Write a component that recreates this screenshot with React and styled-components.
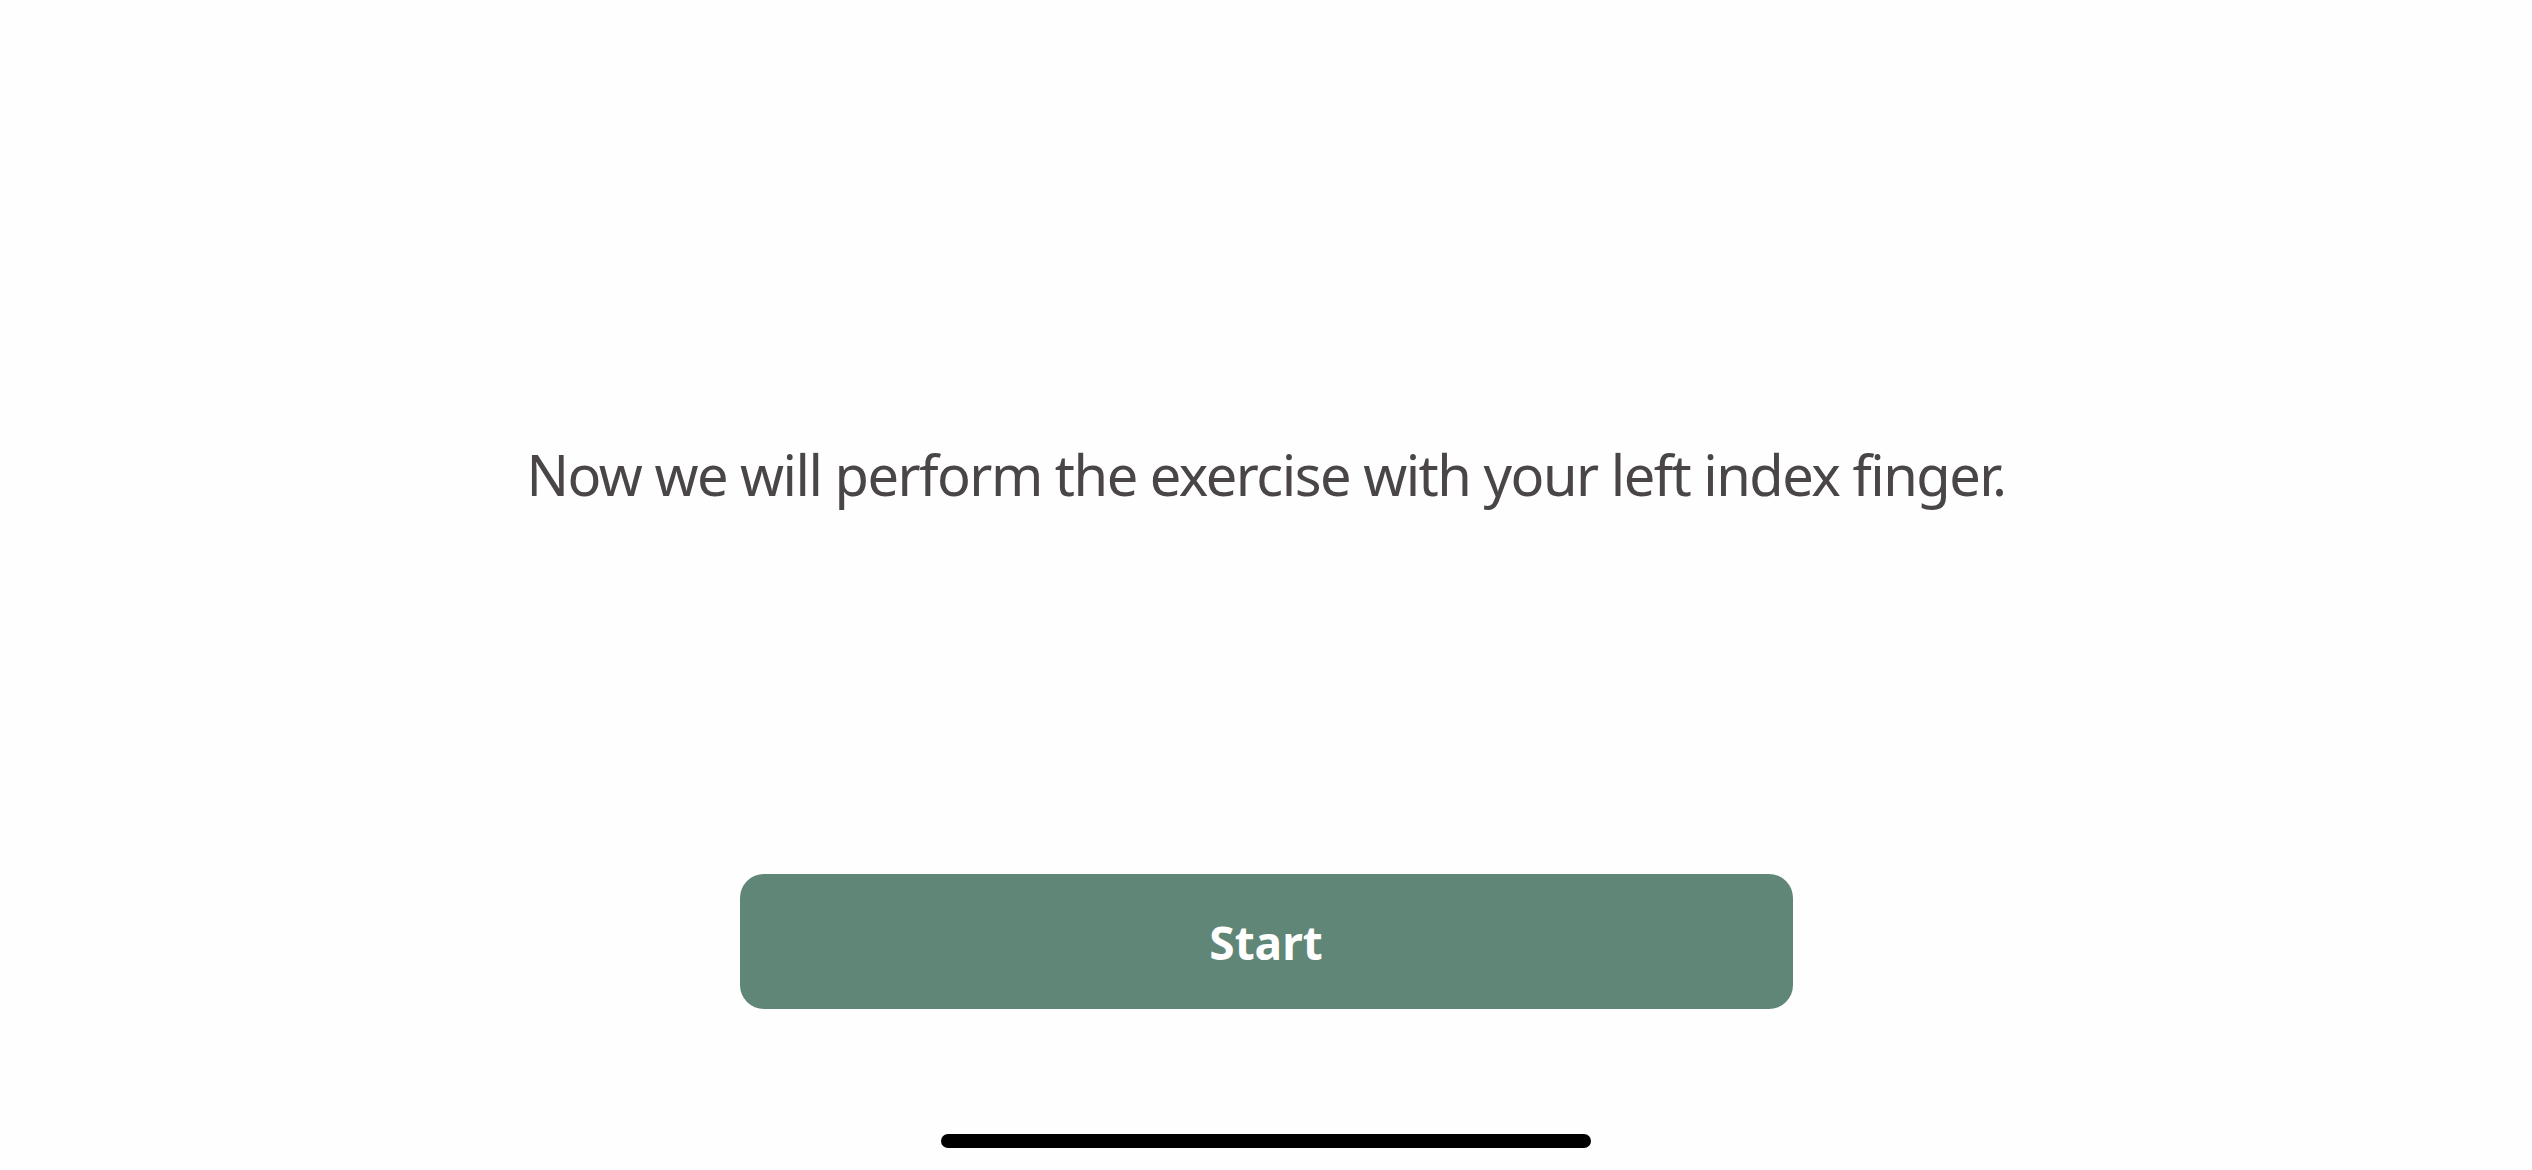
import styled, { createGlobalStyle } from "styled-components";

const GlobalStyle = createGlobalStyle`
  html, body {
    margin: 0;
    padding: 0;
    background: #fefefe;
  }
  body {
    font-family: "Noto Sans", "Open Sans", sans-serif;
  }
`;

const Screen = styled.div`
  width: 2532px;
  height: 1170px;
  display: flex;
  flex-direction: column;
  align-items: center;
  box-sizing: border-box;
  padding-top: 440px;
  overflow: hidden;
`;

const Prompt = styled.p`
  margin: 0;
  font-size: 56px;
  line-height: 68px;
  letter-spacing: -1.5px;
  font-weight: 400;
  color: #4a4648;
  text-align: center;
  white-space: nowrap;
`;

const StartButton = styled.button`
  margin-top: 366px;
  width: 1053px;
  height: 135px;
  border: none;
  border-radius: 24px;
  background: #5f8676;
  color: #ffffff;
  font-family: "Noto Sans", "Open Sans", sans-serif;
  font-size: 46px;
  font-weight: 700;
  cursor: pointer;
`;

const HomeIndicator = styled.div`
  margin-top: 125px;
  width: 650px;
  height: 14px;
  border-radius: 7px;
  background: #000000;
`;

const App = () => {
  return (
    <>
      <GlobalStyle />
      <Screen>
        <Prompt>Now we will perform the exercise with your left index finger.</Prompt>
        <StartButton>Start</StartButton>
        <HomeIndicator />
      </Screen>
    </>
  );
};

export default App;
